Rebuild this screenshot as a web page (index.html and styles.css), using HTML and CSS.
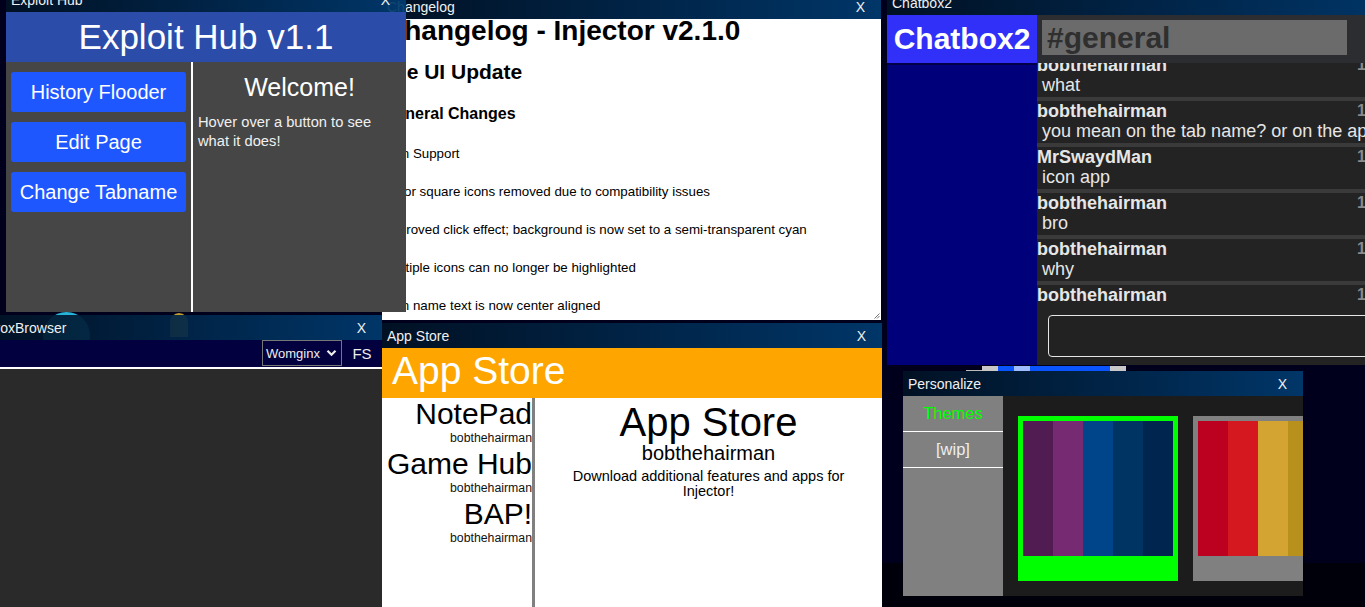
FILE: index.html
```html
<!DOCTYPE html>
<html lang="en">
<head>
<meta charset="utf-8">
<title>Injector Desktop</title>
<link rel="stylesheet" href="styles.css">
</head>
<body>
<div class="desktop">
  <div class="floor"></div>
  <div class="icon-peek icon-cyan"></div>
  <div class="icon-peek icon-gold"></div>
  <div class="pixel-strip">
    <span class="px line"></span>
    <span class="px gray"></span>
    <span class="px blue"></span>
    <span class="px light"></span>
    <span class="px blue wide"></span>
    <span class="px gray"></span>
  </div>

  <section class="win win-changelog">
    <div class="titlebar"><span>Changelog</span><span class="close">X</span></div>
    <div class="cl-body">
      <h1>Changelog - Injector v2.1.0</h1>
      <h2>The UI Update</h2>
      <h3>General Changes</h3>
      <p>Icon Support</p>
      <p>Color square icons removed due to compatibility issues</p>
      <p>Improved click effect; background is now set to a semi-transparent cyan</p>
      <p>Multiple icons can no longer be highlighted</p>
      <p>Icon name text is now center aligned</p>
      <svg class="grip" width="6" height="6" viewBox="0 0 6 6"><path d="M0.5 5.5L5.5 0.5M3 5.5L5.5 3" stroke="#777" stroke-width="1" fill="none"/></svg>
    </div>
  </section>

  <section class="win win-exploit">
    <div class="titlebar"><span>Exploit Hub</span><span class="close">X</span></div>
    <div class="eh-header">Exploit Hub v1.1</div>
    <div class="eh-main">
      <div class="eh-left">
        <div class="eh-btn">History Flooder</div>
        <div class="eh-btn">Edit Page</div>
        <div class="eh-btn">Change Tabname</div>
      </div>
      <div class="eh-divider"></div>
      <div class="eh-right">
        <h2 class="eh-welcome">Welcome!</h2>
        <p class="eh-hint">Hover over a button to see what it does!</p>
      </div>
    </div>
  </section>

  <section class="win win-frox">
    <div class="titlebar"><span>FroxBrowser</span><span class="close">X</span></div>
    <div class="fx-toolbar">
      <div class="fx-select"><span>Womginx</span><svg width="11" height="8" viewBox="0 0 11 8"><path d="M1.5 1.8L5.5 5.8L9.5 1.8" stroke="#eee" stroke-width="2.2" fill="none"/></svg></div>
      <div class="fx-fs">FS</div>
    </div>
    <div class="fx-rule"></div>
    <div class="fx-body"></div>
  </section>

  <section class="win win-store">
    <div class="titlebar"><span>App Store</span><span class="close">X</span></div>
    <div class="as-header">App Store</div>
    <div class="as-main">
      <div class="as-list">
        <div class="as-app">
          <div class="as-app-name">NotePad</div>
          <div class="as-app-author">bobthehairman</div>
        </div>
        <div class="as-app">
          <div class="as-app-name">Game Hub</div>
          <div class="as-app-author">bobthehairman</div>
        </div>
        <div class="as-app">
          <div class="as-app-name">BAP!</div>
          <div class="as-app-author">bobthehairman</div>
        </div>
      </div>
      <div class="as-detail">
        <h2 class="as-detail-title">App Store</h2>
        <div class="as-detail-author">bobthehairman</div>
        <p class="as-detail-desc">Download additional features and apps for Injector!</p>
      </div>
    </div>
  </section>

  <section class="win win-chat">
    <div class="titlebar"><span>Chatbox2</span><span class="close">X</span></div>
    <div class="ch-body">
      <div class="ch-side">
        <div class="ch-brand">Chatbox2</div>
      </div>
      <div class="ch-main">
        <div class="ch-head"><div class="ch-channel">#general</div></div>
        <div class="ch-msgs">
          <div class="ch-msg first">
            <div class="ch-msg-main"><div class="ch-name">bobthehairman</div><div class="ch-text">what</div></div>
            <div class="ch-time">12:41</div>
          </div>
          <div class="ch-msg">
            <div class="ch-msg-main"><div class="ch-name">bobthehairman</div><div class="ch-text">you mean on the tab name? or on the app</div></div>
            <div class="ch-time">12:41</div>
          </div>
          <div class="ch-msg">
            <div class="ch-msg-main"><div class="ch-name">MrSwaydMan</div><div class="ch-text">icon app</div></div>
            <div class="ch-time">12:42</div>
          </div>
          <div class="ch-msg">
            <div class="ch-msg-main"><div class="ch-name">bobthehairman</div><div class="ch-text">bro</div></div>
            <div class="ch-time">12:42</div>
          </div>
          <div class="ch-msg">
            <div class="ch-msg-main"><div class="ch-name">bobthehairman</div><div class="ch-text">why</div></div>
            <div class="ch-time">12:42</div>
          </div>
          <div class="ch-msg">
            <div class="ch-msg-main"><div class="ch-name">bobthehairman</div><div class="ch-text">ok</div></div>
            <div class="ch-time">12:43</div>
          </div>
        </div>
        <div class="ch-compose"><div class="ch-input"></div></div>
      </div>
    </div>
  </section>

  <section class="win win-personalize">
    <div class="titlebar"><span>Personalize</span><span class="close">X</span></div>
    <div class="pz-body">
      <div class="pz-side">
        <div class="pz-tab active">Themes</div>
        <div class="pz-tab">[wip]</div>
      </div>
      <div class="pz-main">
        <div class="pz-card selected">
          <div class="pz-stripes theme-royal"><span></span><span></span><span></span><span></span><span></span></div>
        </div>
        <div class="pz-card">
          <div class="pz-stripes theme-fire"><span></span><span></span><span></span><span></span><span></span></div>
        </div>
      </div>
    </div>
  </section>
</div>
</body>
</html>
```

FILE: styles.css
```css
* { box-sizing: border-box; }
html, body { margin: 0; padding: 0; }
body {
  font-family: "Liberation Sans", Arial, sans-serif;
  background: #00001c;
  overflow: hidden;
}
.desktop {
  position: relative;
  width: 1365px;
  height: 607px;
  overflow: hidden;
  background: #00001c;
}
.floor {
  position: absolute;
  left: 0; right: 0; top: 563px; bottom: 0;
  background: #00000a;
}
.icon-peek { position: absolute; }
.icon-cyan {
  left: 43px; top: 312px; width: 47px; height: 47px;
  border-radius: 50%;
  background: #27b4d6;
}
.icon-gold {
  left: 170px; top: 313px; width: 18px; height: 24px;
  border-radius: 9px 9px 0 0;
  background: #c49b2a;
}
.pixel-strip {
  position: absolute;
  left: 966px; top: 365px;
  height: 6px;
  display: flex;
  align-items: flex-end;
}
.px { display: block; width: 16px; height: 5px; }
.px.line { height: 1px; background: #bbb; }
.px.gray { background: #c8c8c8; }
.px.blue { background: #0a55ff; }
.px.light { background: #9ebcff; }
.px.wide { width: 80px; }

/* generic window */
.win {
  position: absolute;
  display: flex;
  flex-direction: column;
  overflow: hidden;
}
.titlebar {
  flex: none;
  height: 25px;
  display: flex;
  align-items: center;
  justify-content: space-between;
  padding: 0 16px 0 5px;
  color: #f0f0f0;
  font-size: 14px;
  white-space: nowrap;
  background: linear-gradient(90deg, rgba(1, 18, 36, 0.93), rgba(0, 58, 110, 0.93));
}

/* changelog */
.win-changelog { left: 382px; top: -6px; width: 499px; z-index: 2; }
.cl-body {
  position: relative;
  height: 301px;
  background: #fff;
  color: #000;
  padding-left: 2px;
  overflow: hidden;
}
.cl-body h1 { margin: 0; font-size: 28px; line-height: 24px; font-weight: bold; white-space: nowrap; }
.cl-body h2 { margin: 17px 0 0 -3px; font-size: 21px; line-height: 24px; font-weight: bold; }
.cl-body h3 { margin: 20px 0 0; font-size: 16px; line-height: 20px; font-weight: bold; }
.cl-body p { margin: 22px 0 0; font-size: 13.33px; line-height: 16px; white-space: nowrap; }
.grip { position: absolute; right: 1px; bottom: 1px; }

/* exploit hub */
.win-exploit { left: 6px; top: -13px; width: 400px; z-index: 3; }
.eh-header {
  height: 50px;
  background: #2c4ca9;
  color: #fff;
  font-size: 35px;
  line-height: 50px;
  text-align: center;
}
.eh-main { display: flex; height: 250px; background: #464646; }
.eh-left {
  width: 185px;
  padding: 10px 5px;
  display: flex;
  flex-direction: column;
  gap: 10px;
}
.eh-btn {
  height: 40px;
  border-radius: 3px;
  background: #1f57ff;
  color: #fff;
  font-size: 20px;
  line-height: 40px;
  text-align: center;
}
.eh-divider { width: 2px; background: #fff; }
.eh-right { flex: 1; padding: 0 5px; color: #fff; }
.eh-welcome {
  margin: 10px 0 0;
  font-size: 25px;
  line-height: 30px;
  font-weight: normal;
  text-align: center;
}
.eh-hint { margin: 11px 0 0; font-size: 14.7px; line-height: 19px; color: #f0f0f0; }

/* frox browser */
.win-frox { left: -18px; top: 315px; width: 400px; z-index: 2; }
.fx-toolbar {
  height: 27px;
  background: #02003e;
  display: flex;
  justify-content: flex-end;
  align-items: flex-start;
}
.fx-select {
  width: 80px;
  height: 26px;
  border: 1px solid #777;
  display: flex;
  align-items: center;
  justify-content: space-between;
  padding: 0 4px 0 3px;
  color: #eee;
  font-size: 13px;
}
.fx-fs { width: 40px; text-align: center; color: #eee; font-size: 15px; line-height: 27px; }
.fx-rule { height: 2px; background: #fff; }
.fx-body { height: 240px; background: #2a2a2a; }

/* app store */
.win-store { left: 382px; top: 323px; width: 500px; z-index: 2; }
.as-header {
  height: 50px;
  background: #ffa500;
  color: #fff;
  font-size: 39px;
  line-height: 45px;
  padding-left: 10px;
}
.as-main { display: flex; height: 260px; background: #fff; color: #000; }
.as-list { width: 153px; border-right: 3px solid #808080; text-align: right; }
.as-app-name { font-size: 30px; line-height: 31px; white-space: nowrap; }
.as-app-author { font-size: 12.3px; line-height: 19px; color: #111; }
.as-detail { flex: 1; text-align: center; padding: 0 25px; }
.as-detail-title { margin: 1px 0 0; font-size: 40px; line-height: 46px; font-weight: normal; }
.as-detail-author { font-size: 20px; line-height: 17px; }
.as-detail-desc { margin: 7px 0 0; font-size: 14.5px; line-height: 15px; }

/* chatbox */
.win-chat { left: 887px; top: -10px; width: 516px; z-index: 2; }
.ch-body { display: flex; height: 350px; }
.ch-side { width: 150px; flex: none; background: #00007a; }
.ch-brand {
  height: 50px;
  line-height: 48px;
  background: #3030f8;
  border-bottom: 2px solid #00004a;
  color: #fff;
  font-weight: bold;
  font-size: 30px;
  text-align: center;
}
.ch-main { flex: 1; min-width: 0; display: flex; flex-direction: column; background: #232323; }
.ch-head { height: 48px; background: #2b2d31; padding: 5px; }
.ch-channel {
  width: 305px;
  height: 35px;
  background: #6b6b6b;
  color: #2f2f2f;
  font-weight: bold;
  font-size: 30px;
  line-height: 35px;
  padding-left: 5px;
}
.ch-msgs { height: 242px; overflow: hidden; background: #3a3a3a; }
.ch-msg {
  height: 42px;
  margin-bottom: 4px;
  background: #232323;
  display: flex;
  align-items: flex-start;
  padding-right: 5px;
  overflow: hidden;
}
.ch-msg.first { margin-top: -8px; }
.ch-msg-main { flex: 1; min-width: 0; color: #e6e6e6; }
.ch-name { font-weight: bold; font-size: 18px; line-height: 20px; }
.ch-text { padding-left: 5px; font-size: 18px; line-height: 20px; white-space: nowrap; }
.ch-time { flex: none; font-weight: bold; font-size: 16px; line-height: 20px; color: #8a8a8a; }
.ch-compose { height: 60px; padding: 10px 0 0 11px; background: #232323; }
.ch-input {
  width: 400px;
  height: 42px;
  border: 1.5px solid #e6e6e6;
  border-radius: 4px;
  background: #222;
}

/* personalize */
.win-personalize { left: 903px; top: 371px; width: 400px; z-index: 3; }
.pz-body { display: flex; height: 200px; }
.pz-side { width: 100px; flex: none; background: #808080; }
.pz-tab {
  height: 36px;
  line-height: 35px;
  border-bottom: 1px solid #fff;
  text-align: center;
  font-size: 16.5px;
  color: #eee;
}
.pz-tab.active { color: #00ff00; }
.pz-main {
  flex: 1;
  min-width: 0;
  background: #1c1c1c;
  padding: 20px 15px;
  display: flex;
  align-items: flex-start;
  gap: 15px;
  overflow: hidden;
}
.pz-card { flex: none; width: 160px; height: 165px; padding: 5px; background: #808080; }
.pz-card.selected { background: #00ff00; }
.pz-stripes { display: flex; height: 135px; }
.pz-stripes span { flex: none; width: 30px; }
.theme-royal span:nth-child(1) { background: #511c51; }
.theme-royal span:nth-child(2) { background: #762a71; }
.theme-royal span:nth-child(3) { background: #004589; }
.theme-royal span:nth-child(4) { background: #003563; }
.theme-royal span:nth-child(5) { background: #00254f; }
.theme-fire span:nth-child(1) { background: #bc001f; }
.theme-fire span:nth-child(2) { background: #d51820; }
.theme-fire span:nth-child(3) { background: #d4a432; }
.theme-fire span:nth-child(4) { background: #b8911c; }
.theme-fire span:nth-child(5) { background: #8a6a12; }
```
